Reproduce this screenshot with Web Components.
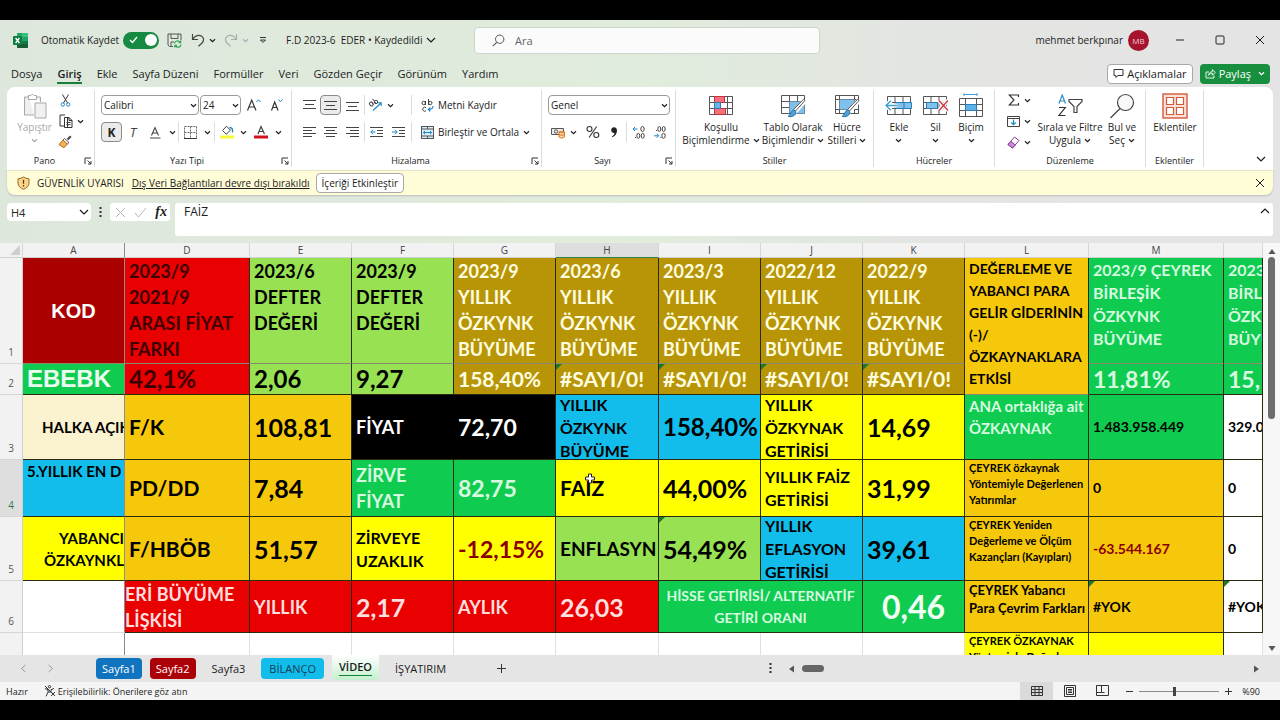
<!DOCTYPE html>
<html lang="tr">
<head>
<meta charset="utf-8">
<title>F.D 2023-6 EDER - Excel</title>
<style>
html,body{margin:0;height:100%;background:#000}
body{font-family:"Open Sans","Noto Sans",sans-serif;color:#1c1c1c}
</style>
</head>
<body>
<excel-app></excel-app>
<script>
const ICONS = {
  excel:[15,15,`<rect x="4" y="0" width="11" height="15" rx="1" fill="#21a366"/><path d="M9 0h5a1 1 0 0 1 1 1v3H9z" fill="#33c481"/><path d="M4 8h11v6a1 1 0 0 1-1 1H5a1 1 0 0 1-1-1z" fill="#185c37"/><path d="M9 8h6v3H9z" fill="#107c41"/><rect y="3" width="9" height="9" rx="1" fill="#107c41"/><path d="M2.600 5l3.800 5M6.400 5l-3.800 5" stroke="#fff" stroke-width="1.300"/>`],
  save:[15,15,`<path d="M6 13.500H2.500L1 12V1h13v6M4 1v4.500h7V1M4 13V9h3" fill="none" stroke="#555" stroke-width="1"/><path d="M7.500 10.500a3 3 0 0 1 5.500-1.200M13.700 7.500v2.200h-2.200M14 11.500a3 3 0 0 1-5.500 1.300M7.800 14.500v-2.200h2.200" fill="none" stroke="#2fa65a" stroke-width="1.200"/>`],
  undo:[14,14,`<path d="M1.500 1v5.500h5.500M1.700 6.300C4 2.500 8 1.300 10.700 3.200c2.600 1.900 2.300 4.800.3 6.800L7.500 13.300" fill="none" stroke="#444" stroke-width="1.200"/>`],
  redo:[14,14,`<path d="M12.500 1v5.500H7M12.300 6.300C10 2.500 6 1.300 3.300 3.200.7 5.100 1 8 3 10l3.500 3.300" fill="none" stroke="#a9b0a8" stroke-width="1.200"/>`],
  chev:[7,7,`<path d="M1 2.300l2.500 2.400L6 2.300" fill="none" stroke="currentColor" stroke-width="1.200"/>`],
  chevL:[10,10,`<path d="M1 3l4 4 4-4" fill="none" stroke="currentColor" stroke-width="1.200"/>`],
  chevU:[10,10,`<path d="M1 7l4-4 4 4" fill="none" stroke="currentColor" stroke-width="1.200"/>`],
  more:[8,8,`<path d="M1 1.500h6M1.500 4L4 6.500 6.500 4z" fill="none" stroke="#333" stroke-width="1"/>`],
  search:[13,13,`<circle cx="7.700" cy="5.200" r="4.200" fill="none" stroke="#555"/><path d="M4.700 8.300L.8 12.200" stroke="#555" stroke-width="1.100"/>`],
  min:[10,10,`<path d="M1 5h8" stroke="#222"/>`],
  max:[10,10,`<rect x="1" y="1" width="8" height="8" rx="1" fill="none" stroke="#222"/>`],
  close:[10,10,`<path d="M1 1l8 8M9 1L1 9" stroke="currentColor"/>`],
  comment:[11,11,`<path d="M1 1.500h9v6H5L2.800 9.500V7.500H1z" fill="none" stroke="#333"/>`],
  share:[11,11,`<path d="M4 4H1v6h8V7.500M3.500 7.300C4 4.800 5.500 3.800 7.300 3.800V1.500L10.300 4.500 7.300 7.300V5.300C5.700 5.300 4.500 6 3.500 7.300z" fill="none" stroke="#fff" stroke-width=".9"/>`],
  paste:[24,26,`<path d="M6 4H1.500v18H11M13 4h4.500v5" fill="#efefef" stroke="#a8a8a8"/><path d="M5.500 2.500h2.300a2 2 0 0 1 3.400 0h2.300v4h-8z" fill="#fff" stroke="#a8a8a8"/><path d="M12 10h11v15H12z" fill="#f1f1f1" stroke="#a8a8a8"/>`],
  cut:[11,13,`<path d="M2.500.5L7.500 9M8.500.5L3.500 9" stroke="#333" fill="none"/><circle cx="2.800" cy="10.500" r="1.700" fill="none" stroke="#1a86c7"/><circle cx="8.200" cy="10.500" r="1.700" fill="none" stroke="#1a86c7"/>`],
  copy:[14,14,`<path d="M5 12H1V1h5M8.500 13.500V3.500H5.500v10h7.500V6.500L10 3.500H8M10 3.500v3h3M7.500 8.500h4M7.500 10.700h4" fill="none" stroke="#333"/>`],
  brush:[14,14,`<path d="M12.800 1.200L9.500 4.500" stroke="#444" stroke-width="2"/><path d="M6.500 3.500l4.500 4-1.800 1.500L5 5z" fill="#fff" stroke="#555"/><path d="M5 5l4.200 4L6 12.800 1 9.500z" fill="#f0b35c" stroke="#b96a16"/>`],
  aup:[15,14,`<path d="M1.500 12.500L5.700 2 10 12.500M3 9h5.500" fill="none" stroke="#333" stroke-width="1.200"/><path d="M10.500 4l2-2.200 2 2.200" fill="none" stroke="#1a86c7"/>`],
  adown:[15,14,`<path d="M2.500 12.500L5.700 4 9 12.500M3.700 9.500h4" fill="none" stroke="#333" stroke-width="1.200"/><path d="M9.500 1.500l2 2.200 2-2.200" fill="none" stroke="#1a86c7"/>`],
  underline:[13,13,`<path d="M2.500 9.500L6 1.500l3.500 8M3.700 7h4.600" fill="none" stroke="#444" stroke-width="1.100"/><path d="M1 12h10.500" stroke="#444"/>`],
  borders:[13,13,`<path d="M.5 6.500h12M6.500.5v12M.5.5h12v12H.5z" fill="none" stroke="#666" stroke-dasharray="2 1"/><path d="M0 12.500h13" stroke="#333"/>`],
  fill:[15,14,`<path d="M2.500 5.500L6.500 1.200l4 4-4.300 4z" fill="none" stroke="#444"/><path d="M9.500 2.500c3 0 3.300 2 3 5" fill="none" stroke="#1a86c7" stroke-width="1.300"/><rect y="10.500" width="14" height="3" fill="#f8f83a"/>`],
  fcolor:[15,14,`<path d="M4 9L7 1.500 10.500 9M5 6.500h4.500" fill="none" stroke="#444" stroke-width="1.200"/><rect y="10.500" width="14" height="3" fill="#d2131f"/>`],
  vtop:[13,13,`<path d="M0 1.500h13M2 5.500h9M0 9.500h13" stroke="#444"/>`],
  vmid:[13,13,`<path d="M0 2.500h13M2 6.500h9M0 10.500h13" stroke="#444"/>`],
  vbot:[13,13,`<path d="M0 3.500h13M2 7.500h9M0 11.500h13" stroke="#444"/>`],
  left:[13,13,`<path d="M0 1.500h13M0 4.500h9M0 7.500h13M0 10.500h9" stroke="#444"/>`],
  center:[13,13,`<path d="M0 1.500h13M2 4.500h9M0 7.500h13M2 10.500h9" stroke="#444"/>`],
  right:[13,13,`<path d="M0 1.500h13M4 4.500h9M0 7.500h13M4 10.500h9" stroke="#444"/>`],
  outdent:[13,13,`<path d="M0 1.500h13M7 4.500h6M7 7.500h6M0 10.500h13" stroke="#444"/><path d="M5.500 6H.8M3 3.800L.8 6 3 8.200" fill="none" stroke="#1a86c7"/>`],
  indent:[13,13,`<path d="M0 1.500h13M7 4.500h6M7 7.500h6M0 10.500h13" stroke="#444"/><path d="M0 6h5M3 3.800L5.200 6 3 8.200" fill="none" stroke="#1a86c7"/>`],
  orient:[15,14,`<ellipse cx="3.300" cy="6" rx="1.700" ry="2" transform="rotate(-40 3.300 6)" fill="none" stroke="#444"/><path d="M3.600 3.700l2 3M4.500.8l3.800 5" stroke="#444"/><circle cx="8" cy="4" r="1.700" fill="none" stroke="#444"/><path d="M5 12.500L13 5M9.800 4.700H13.200V8" fill="none" stroke="#1a86c7" stroke-width="1.100"/>`],
  wrap:[13,13,`<circle cx="2.700" cy="4" r="1.700" fill="none" stroke="#444"/><path d="M4.500 2v4M7.500 0v6M5 8.700a2 2 0 1 0 0 3" fill="none" stroke="#444"/><circle cx="9.300" cy="4" r="1.700" fill="none" stroke="#444"/><path d="M12 7c0 3-1.500 3.500-4.500 3.500M9.300 8.500l-2 2 2 2" fill="none" stroke="#1a86c7" stroke-width="1.100"/>`],
  merge:[13,13,`<rect x=".5" y=".5" width="12" height="12" fill="#d9eefa" stroke="#555"/><path d="M.5 3h12M.5 10h12M6.500.5V3M6.500 10v2.500" stroke="#555"/><path d="M2.500 6.500h8M4 4.900L2.300 6.500 4 8.100M9 4.900l1.700 1.600L9 8.100" fill="none" stroke="#1a86c7"/>`],
  money:[15,13,`<path d="M.5 2.500h12v6H.5z" fill="#eee" stroke="#555"/><circle cx="5" cy="5.500" r="1.700" fill="none" stroke="#555"/><path d="M8 6v5c1.500 1.300 4 1.300 5.500 0V6c-1.500-1-4-1-5.500 0zM8 8.500c1.500 1 4 1 5.500 0M8 6c1.500 1 4 1 5.500 0" fill="#fbd3a8" stroke="#d9781e"/>`],
  percent:[14,14,`<circle cx="3.500" cy="4" r="2.500" fill="none" stroke="#333" stroke-width="1.100"/><circle cx="10.300" cy="10" r="2.500" fill="none" stroke="#333" stroke-width="1.100"/><path d="M10.700 1.500L3 12.500" stroke="#333" stroke-width="1.100"/>`],
  comma:[8,12,`<path d="M4 1.200c2 0 3.200 1.300 3 3.800C6.700 8 5 10.300 2.300 11.300l-.4-.8C3.500 9.600 4.400 8.400 4.500 7c-2 .3-3.300-1-3.300-2.900C1.200 2.300 2.400 1.200 4 1.200z" fill="#222"/>`],
  incdec:[14,13,`<path d="M5.500 3H1M3 1L1 3l2 2" fill="none" stroke="#1a86c7"/><ellipse cx="10.500" cy="3" rx="1.700" ry="2.500" fill="none" stroke="#444"/><ellipse cx="6.300" cy="9.800" rx="1.500" ry="2.500" fill="none" stroke="#444"/><ellipse cx="10.700" cy="9.800" rx="1.500" ry="2.500" fill="none" stroke="#444"/><path d="M3 11.500h1" stroke="#444"/>`],
  decdec:[14,13,`<path d="M1 9.800h4.500M3.700 7.800l2 2-2 2" fill="none" stroke="#1a86c7"/><ellipse cx="6.300" cy="3" rx="1.500" ry="2.500" fill="none" stroke="#444"/><ellipse cx="10.700" cy="3" rx="1.500" ry="2.500" fill="none" stroke="#444"/><ellipse cx="10.500" cy="9.800" rx="1.700" ry="2.500" fill="none" stroke="#444"/><path d="M3 4.500h1M7.300 11.500h1" stroke="#444"/>`],
  cond:[26,22,`<path d="M1.500 1.500h23v18h-23zM1.500 7.500h23M1.500 13.500h23M6.500 1.500v18M19.500 1.500v18" fill="#fff" stroke="#555"/><path d="M6.500 1.500h10v6h-10zM6.500 13.500h11v6h-11z" fill="#f6707c" stroke="#c9303c"/><path d="M6.500 7.500h6v6h-6z" fill="#6fb4e4" stroke="#3278b0"/>`],
  tfmt:[26,24,`<path d="M1.500 1.500h23v18h-23zM1.500 7.500h23M1.500 13.500h23M9.500 1.500v18M17.500 1.500v18" fill="#fff" stroke="#555"/><path d="M9.500 7.500h15v12h-15z" fill="#7fc0ec"/><path d="M25 6.500L14.500 18" stroke="#fff" stroke-width="5"/><path d="M25 6.500L15.500 17l-2-1.500L23.500 5.300z" fill="#fff" stroke="#555"/><path d="M13.500 16c2 .5 3 2 2 4-1.500 2.500-4.500 3-7.500 2.500 2.500-1 2.500-5.500 5.500-6.500z" fill="#4aa3dc" stroke="#2b6f9e"/>`],
  cfmt:[26,24,`<path d="M1.500 1.500h23v18h-23zM1.500 5.500h23M1.500 15.500h23M5.500 1.500v18M20.500 1.500v18" fill="#fff" stroke="#555"/><path d="M5.500 5.500h15v10h-15z" fill="#7fc0ec"/><path d="M25 6.500L14.500 18" stroke="#fff" stroke-width="5"/><path d="M25 6.500L15.500 17l-2-1.500L23.500 5.300z" fill="#fff" stroke="#555"/><path d="M13.500 16c2 .5 3 2 2 4-1.500 2.500-4.500 3-7.500 2.500 2.500-1 2.500-5.500 5.500-6.500z" fill="#4aa3dc" stroke="#2b6f9e"/>`],
  ins:[28,22,`<path d="M2.500 1.500h23v18h-23zM2.500 7.500h23M2.500 13.500h23M10 1.500v18M18 1.500v18" fill="#fff" stroke="#555"/><path d="M11.500 7.500h15v6h-15zM19 7.500v6" fill="#7fc0ec" stroke="#2b7db5"/><path d="M12.500 10.500H1.500M6 5.500l-5 5 5 5" fill="none" stroke="#fff" stroke-width="4"/><path d="M12.500 10.500H1.500M6 5.800l-5 4.700 5 4.700" fill="none" stroke="#3c9fd6" stroke-width="1.400"/>`],
  del:[28,22,`<path d="M1.500 1.500h23v18h-23zM1.500 7.500h23M1.500 13.500h23M9 1.500v18M17 1.500v18" fill="#fff" stroke="#555"/><path d="M4.500 7.500h11v6h-11z" fill="#7fc0ec" stroke="#2b7db5"/><path d="M17 5.500l9 10M26 5.500l-9 10" stroke="#fff" stroke-width="4"/><path d="M17 5.500l9 10M26 5.500l-9 10" stroke="#d5323e" stroke-width="1.300"/>`],
  fmt:[26,26,`<path d="M6 1.500h13M6 0v3M19 0v3" stroke="#3c9fd6" fill="none"/><path d="M1.500 5.500h23v18h-23zM1.500 11.500h23M1.500 17.500h23M7.500 5.500v18M18.500 5.500v18" fill="#fff" stroke="#555"/><path d="M7.500 11.500h11v6h-11z" fill="#5fb0e5" stroke="#2b7db5"/>`],
  sum:[12,12,`<path d="M10.500 3V1H1.200L6 6l-4.800 5h9.300V9" fill="none" stroke="#333" stroke-width="1.200"/>`],
  filld:[13,13,`<path d="M.5 1.500h12v10H.5zM.5 3.500h12" fill="none" stroke="#444"/><path d="M6.500 4.500v5M4.300 7.500l2.200 2.200 2.200-2.200" fill="none" stroke="#1a86c7" stroke-width="1.200"/>`],
  eraser:[13,13,`<path d="M7.500 1l4.500 3.500L5.500 12 1 8.500z" fill="#fff" stroke="#8a3a9c"/><path d="M3.800 5.200L8.300 9 5.500 12 1 8.500z" fill="#c98ad6" stroke="#8a3a9c"/>`],
  sort:[26,24,`<path d="M2 9.500L5.200 1 8.500 9.500M3 7h4.500" fill="none" stroke="#2a8fc9" stroke-width="1.200"/><path d="M2 13.500h6.300L2 21.500h6.500" fill="none" stroke="#333" stroke-width="1.200"/><path d="M12 5.500h13v2l-5 5v6h-3v-6l-5-5z" fill="none" stroke="#444" stroke-width="1.200"/>`],
  find:[26,26,`<circle cx="16.500" cy="9.500" r="8" fill="#fafafa" stroke="#444" stroke-width="1.200"/><path d="M11 15.500L1.500 25" stroke="#444" stroke-width="1.200"/>`],
  addin:[26,26,`<rect x="1" y="1" width="24" height="24" fill="#fbe1d9" stroke="#d05b37" stroke-width="1.400"/><path d="M4.500 4.500h7v7h-7zM14.500 4.500h7v7h-7zM4.500 14.500h7v7h-7zM14.500 14.500h7v7h-7z" fill="#fff" stroke="#d05b37" stroke-width="1.200"/>`],
  launch:[8,8,`<path d="M1 7V1h6M3.500 3.500L7 7M7 4v3H4" fill="none" stroke="#333"/>`],
  shield:[13,14,`<path d="M6.500 1C8 2 10 2.700 12 2.800V7c0 3-2.300 5-5.500 6.300C3.300 12 1 10 1 7V2.800C3 2.700 5 2 6.500 1z" fill="#fbd58b" stroke="#9b6a21"/><path d="M6.500 3.800v4M6.500 9v1.500" stroke="#5b3a0b" stroke-width="1.300"/>`],
  check:[13,11,`<path d="M1 6l3.500 4L12 1" fill="none" stroke="#b5b5b5"/>`],
  cross:[11,11,`<path d="M1 1l9 9M10 1l-9 9" stroke="#b5b5b5"/>`],
  dots:[3,11,`<path d="M.5 0h2v2h-2zM.5 4h2v2h-2zM.5 8h2v2h-2z" fill="#333"/>`],
  tick:[9,8,`<path d="M1 4l2.500 2.500L8 1" fill="none" stroke="#fff" stroke-width="1.400"/>`],
  prev:[7,9,`<path d="M5.500 1L1.500 4.500l4 3.500" fill="none" stroke="#9a9a9a"/>`],
  next:[7,9,`<path d="M1.500 1l4 3.500-4 3.500" fill="none" stroke="#9a9a9a"/>`],
  plus:[11,11,`<path d="M5.500 1v9M1 5.500h9" stroke="#333"/>`],
  plusS:[9,9,`<path d="M4.500 1v7M1 4.500h7" stroke="#333"/>`],
  minusS:[9,9,`<path d="M1 4.500h7" stroke="#333"/>`],
  triL:[7,8,`<path d="M6 .5v7L1 4z" fill="#555"/>`],
  triR:[7,8,`<path d="M1 .5v7L6 4z" fill="#555"/>`],
  triU:[8,7,`<path d="M.5 6h7L4 1z" fill="#555"/>`],
  triD:[8,7,`<path d="M.5 1h7L4 6z" fill="#555"/>`],
  corner:[12,12,`<path d="M11 1v10H1z" fill="#cfcfcf"/>`],
  acc:[12,12,`<circle cx="5.500" cy="1.700" r="1.200" fill="none" stroke="#333"/><path d="M1 3.500l3 1.200v2.500L2 11.300M10 3.500L7 4.700v2L8 8M4 7h3M1 1l10 10M7 11l4-4" fill="none" stroke="#333"/>`],
  vnorm:[12,12,`<path d="M.5 1.500h11v9H.5zM.5 4.500h11M.5 7.500h11M4 1.500v9M8 1.500v9" fill="none" stroke="#333"/>`],
  vpage:[12,12,`<path d="M.5.5h11v11H.5zM2.500 2.500h7v7h-7zM4 4.500h4M4 6h4M4 7.500h4" fill="none" stroke="#333"/>`],
  vbrk:[13,12,`<path d="M.5.500h12v10H.5zM.5 7.500h5v-7M5.500 7.500h3" fill="none" stroke="#333"/>`],
  cell:[10,11,`<path d="M3.500 1h3v3h3v3h-3v3h-3V7h-3V4h3z" fill="#fff" stroke="#222"/>`]
};
const BASE = `*,:host{box-sizing:border-box}
button,input,select,textarea{font:inherit;color:inherit;margin:0}
button{background:none;border:0;padding:0;display:flex;align-items:center;justify-content:center;white-space:nowrap}
`;
class Part extends HTMLElement {
  constructor() {
    super();
    const C = this.constructor;
    this.attachShadow({mode:'open'}).innerHTML = `<style>${BASE}${C.css}</style>${C.html}`;
  }
}
const define = (tag, css, html) => customElements.define(tag, class extends Part { static css = css; static html = html; });

customElements.define('ui-icon', class extends HTMLElement {
  connectedCallback() {
    if (this.shadowRoot) return;
    const [w,h,body] = ICONS[this.getAttribute('name')];
    this.attachShadow({mode:'open'}).innerHTML =
      `<style>:host{display:block;flex:none}svg{display:block}</style><svg width="${w}" height="${h}" viewBox="0 0 ${w} ${h}" aria-hidden="true">${body}</svg>`;
  }
});

/* Small ribbon button; --w sets its width */
customElements.define('tool-button', class extends HTMLElement {
  connectedCallback() {
    if (this.shadowRoot) return;
    const icon = this.getAttribute('icon'), label = this.getAttribute('label');
    this.attachShadow({mode:'open'}).innerHTML = `<style>${BASE}
      :host{display:block;flex:none;width:var(--w,auto);height:20px;color:#222}
      button{width:100%;height:100%;gap:4px;border-radius:4px}
      :host([on]) button{background:#ebebeb;border:1px solid #8b8b8b}
      </style><button${label?` aria-label="${label}"`:''}>${icon?`<ui-icon name="${icon}"></ui-icon>`:''}<slot></slot></button>`;
  }
});

/* Large ribbon button: icon above a caption */
customElements.define('big-button', class extends HTMLElement {
  connectedCallback() {
    if (this.shadowRoot) return;
    this.attachShadow({mode:'open'}).innerHTML = `<style>${BASE}
      :host{display:block;flex:none;width:var(--w);padding-top:3px}
      button{width:100%;flex-direction:column;justify-content:flex-start;line-height:13px;gap:2px;white-space:normal}
      .i{height:26px;display:grid;place-items:center}
      ::slotted(span){display:flex;align-items:center;gap:3px;height:13px;white-space:nowrap}
      .t{display:flex;flex-direction:column;align-items:center}
      </style><button><span class="i"><ui-icon name="${this.getAttribute('icon')}"></ui-icon></span><span class="t"><slot></slot></span></button>`;
  }
});

customElements.define('combo-box', class extends HTMLElement {
  connectedCallback() {
    if (this.shadowRoot) return;
    this.attachShadow({mode:'open'}).innerHTML = `<style>${BASE}
      :host{display:grid;align-items:center;flex:none;width:var(--w);height:20px}
      select,ui-icon{grid-area:1/1}
      select{appearance:none;width:100%;height:100%;border:1px solid #9a9a9a;border-radius:4px;background:#fff;padding:0 2px;color:#222}
      :host([plain]) select{border:0;padding:0 4px}
      ui-icon{justify-self:end;margin-right:2px;pointer-events:none}
      </style><select aria-label="${this.getAttribute('label')}"><option>${this.getAttribute('value')}</option></select><ui-icon name="${this.getAttribute('arrow')||'chev'}"></ui-icon>`;
  }
});

customElements.define('ribbon-group', class extends HTMLElement {
  connectedCallback() {
    if (this.shadowRoot) return;
    this.attachShadow({mode:'open'}).innerHTML = `<style>${BASE}
      :host{display:flex;flex-direction:column;flex:none;width:var(--w);border-right:1px solid #dcdcdc;margin:3px 0}
      .body{flex:1;padding:0 0 0 var(--in,6px);display:flex;min-height:0}
      footer{height:13px;display:grid;grid-template-columns:1fr;align-items:center;font-size:9px;line-height:12px}
      :host([launcher]) footer{grid-template-columns:1fr 12px}
      footer span{justify-self:center;white-space:nowrap}
      </style><div class="body"><slot></slot></div><footer><span>${this.getAttribute('label')}</span>${this.hasAttribute('launcher')?'<button aria-label="Ayarlar"><ui-icon name="launch"></ui-icon></button>':''}</footer>`;
  }
});

define('title-bar', `
:host{display:grid;grid-template-columns:minmax(474px,1fr) 27% minmax(0,1fr);align-items:center;height:40px;font-size:10px}
.l,.r{display:flex;align-items:center;white-space:nowrap}
.l{padding-left:13px}
.auto{display:flex;align-items:center;gap:4px;margin-left:13px}
.auto input{position:absolute;opacity:0;width:0;height:0}
.sw{width:36px;height:17px;border-radius:9px;background:#178a41;display:flex;align-items:center;justify-content:space-between;padding:0 2px 0 6px}
.sw i{width:12px;height:12px;border-radius:50%;background:#fff}
.ml{margin-left:8px}
.file{margin-left:19px;gap:4px}
.s{display:flex;align-items:center;height:27px;background:#fafbfa;border:1px solid #cbd5c9;border-radius:4px;padding-left:17px;gap:10px}
.s input{border:0;background:none;outline:0;flex:1;min-width:0;font-size:11px;padding:0}
.s input::placeholder{color:#666;opacity:1}
.r{justify-content:flex-end;padding-right:15px}
.av{width:21px;height:21px;border-radius:50%;background:#a5132d;color:#f3c9d1;font-size:8px;display:grid;place-items:center;margin:0 26px 0 5px}
.r button+button{margin-left:30px}`, `
<div class="l"><ui-icon name="excel"></ui-icon>
<label class="auto">Otomatik Kaydet<input type="checkbox" checked><span class="sw"><ui-icon name="tick"></ui-icon><i></i></span></label>
<button class="ml" aria-label="Kaydet"><ui-icon name="save"></ui-icon></button>
<button style="margin-left:9px;gap:4px" aria-label="Geri al"><ui-icon name="undo"></ui-icon><ui-icon name="chev"></ui-icon></button>
<button style="margin-left:8px;gap:4px;color:#aab" aria-label="Yinele"><ui-icon name="redo"></ui-icon><ui-icon name="chev"></ui-icon></button>
<button style="margin-left:10px" aria-label="Özelleştir"><ui-icon name="more"></ui-icon></button>
<button class="file"><span style="white-space:pre">F.D 2023-6  EDER • Kaydedildi</span><ui-icon name="chevL"></ui-icon></button></div>
<label class="s"><ui-icon name="search"></ui-icon><input type="search" placeholder="Ara" aria-label="Ara"></label>
<div class="r"><span>mehmet berkpınar</span><span class="av">MB</span>
<button aria-label="Simge durumuna küçült"><ui-icon name="min"></ui-icon></button><button aria-label="Ekranı kapla"><ui-icon name="max"></ui-icon></button><button aria-label="Kapat"><ui-icon name="close"></ui-icon></button></div>`);

define('menu-tabs', `
:host{display:flex;align-items:center;height:27px;padding:0 10px 0 11px;font-size:11px}
nav{display:flex;gap:15px;flex:1}
nav button{height:20px;border-bottom:2px solid transparent;padding-top:2px}
nav button[aria-current]{font-weight:600;border-color:#14803c}
.c,.p{height:20px;border-radius:4px;padding:0 5px;gap:3px}
.c{background:#fff;border:1px solid #a9a9a9}
.p{background:#178f3f;color:#fff;margin-left:7px}
.p ui-icon:last-child{margin-left:4px}`, `
<nav><button>Dosya</button><button aria-current="page">Giriş</button><button>Ekle</button><button>Sayfa Düzeni</button><button>Formüller</button><button>Veri</button><button>Gözden Geçir</button><button>Görünüm</button><button>Yardım</button></nav>
<button class="c"><ui-icon name="comment"></ui-icon>Açıklamalar</button>
<button class="p"><ui-icon name="share"></ui-icon>Paylaş<ui-icon name="chev"></ui-icon></button>`);

const CH = '<ui-icon name="chev"></ui-icon>';
define('ribbon-bar', `
:host{display:flex;height:83px;margin:0 7px;background:#fff;border-radius:8px 8px 0 0;font-size:10px}
.rows{display:flex;flex-direction:column;gap:7px;padding-top:5px}
.row{display:flex;align-items:center;height:20px}
.col{display:flex;flex-direction:column;gap:1px}
.sep{width:1px;height:20px;background:#dcdcdc}
.off{color:#a8a8a8}
.auto{--w:auto}
.k{font-weight:700;font-size:12px}
.it{font-style:italic;font-size:13px;color:#444}
.end{flex:1;display:flex;align-items:flex-end;justify-content:flex-end;padding:0 7px 6px}`, `
<ribbon-group label="Pano" launcher style="--w:88px;--in:7px">
 <big-button icon="paste" class="off" style="--w:41px"><span>Yapıştır</span><span>${CH}</span></big-button>
 <div class="col"><tool-button icon="cut" label="Kes" style="--w:20px"></tool-button>
 <tool-button icon="copy" style="--w:32px" label="Kopyala">${CH}</tool-button>
 <tool-button icon="brush" label="Biçim Boyacısı" style="--w:20px"></tool-button></div></ribbon-group>
<ribbon-group label="Yazı Tipi" launcher style="--w:197px;--in:6px"><div class="rows">
 <div class="row"><combo-box label="Yazı tipi" value="Calibri" style="--w:98px"></combo-box><combo-box label="Boyut" value="24" style="--w:41px;margin-left:1px"></combo-box>
 <tool-button icon="aup" label="Büyüt" style="--w:24px"></tool-button><tool-button icon="adown" label="Küçült" style="--w:22px"></tool-button></div>
 <div class="row"><tool-button on style="--w:21px" class="k">K</tool-button><tool-button class="it" style="--w:22px">T</tool-button><tool-button icon="underline" label="Altı çizili" style="--w:22px"></tool-button><tool-button style="--w:12px" label="Çizgi">${CH}</tool-button><span class="sep"></span>
 <tool-button icon="borders" label="Kenarlık" style="--w:22px"></tool-button><tool-button style="--w:13px" label="Kenarlıklar">${CH}</tool-button><span class="sep"></span>
 <tool-button icon="fill" label="Dolgu" style="--w:24px"></tool-button><tool-button style="--w:9px" label="Dolgular">${CH}</tool-button><tool-button icon="fcolor" label="Yazı rengi" style="--w:26px"></tool-button><tool-button style="--w:9px" label="Renkler">${CH}</tool-button></div></div></ribbon-group>
<ribbon-group label="Hizalama" launcher style="--w:250px"><div class="rows">
 <div class="row"><tool-button icon="vtop" label="Üste hizala" style="--w:22px"></tool-button><tool-button on icon="vmid" label="Ortaya hizala" style="--w:21px"></tool-button><tool-button icon="vbot" label="Alta hizala" style="--w:23px"></tool-button><span class="sep"></span>
 <tool-button icon="orient" label="Yön" style="--w:32px">${CH}</tool-button><span class="sep" style="margin:0 9px 0 14px"></span><tool-button icon="wrap" class="auto">Metni Kaydır</tool-button></div>
 <div class="row"><tool-button icon="left" label="Sola" style="--w:22px"></tool-button><tool-button icon="center" label="Ortala" style="--w:21px"></tool-button><tool-button icon="right" label="Sağa" style="--w:23px"></tool-button><span class="sep"></span>
 <tool-button icon="outdent" label="Girintiyi azalt" style="--w:22px"></tool-button><tool-button icon="indent" label="Girintiyi artır" style="--w:22px"></tool-button><span class="sep" style="margin:0 9px 0 2px"></span><tool-button icon="merge" class="auto">Birleştir ve Ortala<ui-icon name="chev"></ui-icon></tool-button></div></div></ribbon-group>
<ribbon-group label="Sayı" launcher style="--w:134px"><div class="rows">
 <div class="row"><combo-box label="Sayı biçimi" value="Genel" style="--w:122px"></combo-box></div>
 <div class="row"><tool-button icon="money" label="Para" style="--w:32px">${CH}</tool-button><tool-button icon="percent" label="Yüzde" style="--w:26px"></tool-button><tool-button icon="comma" label="Virgül" style="--w:16px"></tool-button><span class="sep" style="margin:0 2px 0 4px"></span>
 <tool-button icon="incdec" label="Ondalık artır" style="--w:20px"></tool-button><tool-button icon="decdec" label="Ondalık azalt" style="--w:22px"></tool-button></div></div></ribbon-group>
<ribbon-group label="Stiller" style="--w:198px"><big-button icon="cond" style="--w:78px"><span>Koşullu</span><span>Biçimlendirme ${CH}</span></big-button>
 <big-button icon="tfmt" style="--w:66px"><span>Tablo Olarak</span><span>Biçimlendir ${CH}</span></big-button><big-button icon="cfmt" style="--w:42px"><span>Hücre</span><span>Stilleri ${CH}</span></big-button></ribbon-group>
<ribbon-group label="Hücreler" style="--w:121px"><big-button icon="ins" style="--w:38px"><span>Ekle</span><span>${CH}</span></big-button><big-button icon="del" style="--w:35px"><span>Sil</span><span>${CH}</span></big-button><big-button icon="fmt" style="--w:36px"><span>Biçim</span><span>${CH}</span></big-button></ribbon-group>
<ribbon-group label="Düzenleme" style="--w:151px;--in:8px"><div class="col"><tool-button icon="sum" label="Toplam" style="--w:32px">${CH}</tool-button><tool-button icon="filld" label="Doldur" style="--w:32px">${CH}</tool-button><tool-button icon="eraser" label="Temizle" style="--w:32px">${CH}</tool-button></div>
 <big-button icon="sort" style="--w:70px"><span>Sırala ve Filtre</span><span>Uygula ${CH}</span></big-button><big-button icon="find" style="--w:34px"><span>Bul ve</span><span>Seç ${CH}</span></big-button></ribbon-group>
<ribbon-group label="Eklentiler" style="--w:58px;--in:4px"><big-button icon="addin" style="--w:50px"><span>Eklentiler</span></big-button></ribbon-group>
<div class="end"><button aria-label="Şeridi daralt"><ui-icon name="chevL"></ui-icon></button></div>`);

define('security-bar', `
:host{display:flex;align-items:center;height:25px;margin:0 7px;padding:0 8px 0 10px;background:#fffcd8;border-top:1px solid #e6e3c8;border-radius:0 0 8px 8px;font-size:10px;box-shadow:0 1px 2px #bbb}
strong{font-weight:500;margin-left:7px}
a{color:#222;margin-left:8px}
.e{height:20px;background:#fff;border:1px solid #a9a9a9;border-radius:4px;padding:0 5px;margin-left:6px}
.x{margin-left:auto}`, `
<ui-icon name="shield"></ui-icon><strong>GÜVENLİK UYARISI</strong><a href="#baglantilar">Dış Veri Bağlantıları devre dışı bırakıldı</a><button class="e">İçeriği Etkinleştir</button><button class="x" aria-label="Kapat"><ui-icon name="close"></ui-icon></button>`);

define('formula-bar', `
:host{display:flex;align-items:flex-start;height:48px;padding:8px 7px 0 7px;font-size:11px}
combo-box{height:18px}
.d{margin:4px 8px 0 8px}
.f{display:flex;align-items:center;justify-content:space-between;width:60px;height:18px;background:#fff;border-radius:3px;padding:0 3px 0 5px}
.fx{font:italic 700 14px "Liberation Serif",serif;line-height:16px}
.in{flex:1;display:flex;background:#fff;border-radius:3px;height:33px;margin-left:5px;padding:0 3px 0 9px;align-items:flex-start}
.in button{margin-top:3px}
textarea{flex:1;border:0;resize:none;height:33px;padding:0;line-height:18px;font-size:12px;background:none;outline:0;overflow:hidden}`, `
<combo-box plain arrow="chevL" label="Ad kutusu" value="H4" style="--w:84px"></combo-box><ui-icon class="d" name="dots"></ui-icon>
<div class="f"><button aria-label="İptal"><ui-icon name="cross"></ui-icon></button><button aria-label="Gir"><ui-icon name="check"></ui-icon></button><button class="fx" aria-label="İşlev ekle">fx</button></div>
<div class="in"><textarea aria-label="Formül çubuğu">FAİZ</textarea><button aria-label="Daralt"><ui-icon name="chevU"></ui-icon></button></div>`);

const RED='#e90000', ORG='#f6c80b', LIME='#97e153', GOLD='#b79507', GRN='#0fcb50', CYAN='#12bdec', YEL='#ffff00', IVORY='#fffde0', MINT='#d8fbe0', ROSE='#ffdede', MAR='#8a0000';
const COLS = [['A',102],['D',125],['E',102],['F',102],['G',102],['H',103],['I',102],['J',102],['K',102],['L',124],['M',135],['',0]];
/* cell: [text, background, colour, text style, options] */
const growth = q => [q+'\nYILLIK\nÖZKYNK\nBÜYÜME',GOLD,IVORY,'h top'];
const ROWS = [
 [106,[['KOD','#ab0000','#fff','kod mid'],['2023/9\n2021/9\nARASI FİYAT\nFARKI',RED,'#3c0000','h top'],['2023/6\nDEFTER\nDEĞERİ',LIME,'#000','h top'],['2023/9\nDEFTER\nDEĞERİ',LIME,'#000','h top'],growth('2023/9'),growth('2023/6'),growth('2023/3'),growth('2022/12'),growth('2022/9'),
  ['DEĞERLEME VE\nYABANCI PARA\nGELİR GİDERİNİN\n(-)/\nÖZKAYNAKLARA\nETKİSİ',ORG,'#000','w top',{rs:2}],['2023/9 ÇEYREK\nBİRLEŞİK\nÖZKYNK\nBÜYÜME',GRN,MINT,'m top'],['2023\nBİRLE\nÖZKY\nBÜYÜ',GRN,MINT,'m top']]],
 [31,[['EBEBK',GRN,'#eafff0','ebk'],['42,1%',RED,'#3c0000','p'],['2,06',LIME,'#000','p'],['9,27',LIME,'#000','p'],['158,40%',GOLD,IVORY,'v'],['#SAYI/0!',GOLD,IVORY,'v',{err:1}],['#SAYI/0!',GOLD,IVORY,'v',{err:1}],['#SAYI/0!',GOLD,IVORY,'v',{err:1}],['#SAYI/0!',GOLD,IVORY,'v',{err:1}],['11,81%',GRN,MINT,'n'],['15,',GRN,MINT,'n']]],
 [65,[['HALKA AÇIK','#fbf3cf','#000','l ind'],['F/K',ORG,'#000','v'],['108,81',ORG,'#000','b'],['FİYAT','#000','#fff','h',{nb:1}],['72,70','#000','#fff','n'],['YILLIK\nÖZKYNK\nBÜYÜME',CYAN,'#000','m'],['158,40%',CYAN,'#000','p'],['YILLIK\nÖZKYNAK\nGETİRİSİ',YEL,'#000','m'],['14,69',YEL,'#000','b'],['ANA ortaklığa ait\nÖZKAYNAK',GRN,MINT,'l top'],['1.483.958.449',GRN,'#000','s'],['329.0','#fff','#000','s']]],
 [57,[['5.YILLIK EN D',CYAN,'#000','l top'],['PD/DD',ORG,'#000','v'],['7,84',ORG,'#000','b'],['ZİRVE\nFİYAT',GRN,MINT,'h'],['82,75',GRN,MINT,'n'],['FAİZ',YEL,'#000','v',{cur:1}],['44,00%',YEL,'#000','b'],['YILLIK FAİZ\nGETİRİSİ',YEL,'#000','m'],['31,99',YEL,'#000','b'],['ÇEYREK özkaynak\nYöntemiyle Değerlenen\nYatırımlar',ORG,'#000','t top'],['0',ORG,'#000','s'],['0','#fff','#000','s']]],
 [64,[['YABANCI\nÖZKAYNKL',YEL,'#000','l ra'],['F/HBÖB',ORG,'#000','v'],['51,57',ORG,'#000','b'],['ZİRVEYE\nUZAKLIK',YEL,'#000','m'],['-12,15%',YEL,MAR,'n'],['ENFLASYN',LIME,'#000','y'],['54,49%',LIME,'#000','b',{err:1}],['YILLIK\nEFLASYON\nGETİRİSİ',CYAN,'#000','m'],['39,61',CYAN,'#000','b'],['ÇEYREK Yeniden\nDeğerleme ve Ölçüm\nKazançları (Kayıpları)',ORG,'#000','t top'],['-63.544.167',ORG,MAR,'s'],['0','#fff','#000','s']]],
 [52,[['','','','l'],['ERİ BÜYÜME\nLİŞKİSİ',RED,ROSE,'h flush'],['YILLIK',RED,ROSE,'h'],['2,17',RED,ROSE,'b'],['AYLIK',RED,ROSE,'h'],['26,03',RED,ROSE,'b'],['HİSSE GETİRİSİ/ ALTERNATİF\nGETİRİ ORANI',GRN,MINT,'w mid',{cs:2}],['0,46',GRN,'#f2fff5','x mid'],['ÇEYREK Yabancı\nPara Çevrim Farkları',ORG,'#000','u top'],['#YOK',ORG,'#000','s',{err:1}],['#YOK','#fff','#000','s',{err:1}]]],
 [52,[['','','','l'],['','','','l'],['','','','l'],['','','','l'],['','','','l'],['','','','l'],['','','','l'],['','','','l'],['','','','l'],['ÇEYREK ÖZKAYNAK\nYöntemiyle Değerlenen',YEL,'#000','t top'],['',YEL,'#000','s'],['','','','s']]]
];
customElements.define('sheet-grid', class extends HTMLElement {
  connectedCallback() {
    if (this.shadowRoot) return;
    const head = COLS.map(([n])=>`<th scope="col"${n==='H'?' class="sel"':''}>${n}</th>`).join('');
    const body = ROWS.map(([h,cells],i)=>`<tr style="--h:${h-1}px"><th scope="row"${i===3?' class="sel"':''}>${i<6?i+1:''}</th>${cells.map(([t,bg,fg,c,o={}])=>
      `<td class="${bg?'on':''}${o.err?' err':''}${o.nb?' nb':''}"${o.rs?' rowspan="2"':''}${o.cs?` colspan="${o.cs}"`:''} style="${bg?`--bg:${bg};--fg:${fg}`:''}${o.rs?';--h:136px':''}"><div class="${c}">${t?`<span>${t}</span>`:''}</div>${o.cur?'<ui-icon class="cur" name="cell"></ui-icon>':''}</td>`).join('')}</tr>`).join('');
    this.attachShadow({mode:'open'}).innerHTML = `<style>${BASE}
    :host{display:flex;flex:1;min-height:0;background:#fff;overflow:hidden}
    .view{flex:1;min-width:0;overflow:hidden}
    table{width:100%;border-collapse:separate;border-spacing:0;table-layout:fixed;font-family:Lato,"Open Sans",sans-serif;font-weight:700}
    thead th{height:15px;padding:0;background:#f2f2f2;border-right:1px solid #d6d6d6;border-bottom:1px solid #cfcfcf;font:400 10px/14px "Open Sans",sans-serif;color:#444}
    thead th.sel{background:#dedede;border-bottom-color:#2f7d4a}
    thead th:first-child ui-icon{margin-left:9px}
    tbody th{background:#f2f2f2;padding:0 0 4px;vertical-align:bottom;font:400 10px/14px "Open Sans",sans-serif;color:#555;border-bottom:1px solid #d6d6d6;border-right:1px solid #cfcfcf}
    tbody th.sel{background:#dedede;color:#2f7d4a}
    td{padding:0;border-right:1px solid #e0e0e0;border-bottom:1px solid #e0e0e0;position:relative}
    td.on{background:var(--bg);color:var(--fg);border-color:#2a2a10}
    td.nb{border-right-color:#000}
    tbody tr:first-child td{border-bottom-color:#8a8a70}
    th:nth-child(2),tbody tr td:nth-child(2){border-right-color:#8c8c8c}
    td div{height:var(--h);overflow:hidden;display:flex;align-items:center;padding:0 0 0 4px;white-space:pre}
    td.err::before{content:"";position:absolute;left:0;top:0;border:3px solid transparent;border-left-color:#1c7a2c;border-top-color:#1c7a2c}
    td div.top{align-items:flex-start}
    td div.mid{justify-content:center;text-align:center;padding:0}
    .kod{font:700 20px/24px "Liberation Sans",sans-serif}
    .ebk{font:700 24px/28px "Liberation Sans",sans-serif}
    .h{font-size:18px;line-height:26px}
    .y{font-size:19px;line-height:26px}
    .m{font-size:16px;line-height:23px}
    .l{font-size:15px;line-height:22px}
    .n{font-size:23px;line-height:28px}
    .v{font-size:21px;line-height:28px}
    .p{font-size:24px;line-height:28px}
    .b{font-size:25px;line-height:30px}
    .x{font-size:32px;line-height:36px}
    .s{font-size:14px;line-height:18px}
    .t{font-size:11px;line-height:16px}
    .u{font-size:13px;line-height:18px}
    .w{font-size:14px;line-height:22px}
    td div.ind{padding-left:19px}
    td div.ra{justify-content:flex-end;text-align:right;padding:0}
    td div.flush{padding:0}
    .cur{position:absolute;left:29px;top:13px}
    aside{width:17px;flex:none;background:#f7f7f7;display:flex;flex-direction:column;align-items:center;padding:3px 0 2px}
    aside button{height:10px}
    .track{flex:1;width:100%;display:flex;justify-content:center;padding-top:1px}
    .thumb{width:7px;height:42%;border-radius:4px;background:#6c6c6c}
    </style><div class="view"><table><colgroup><col style="width:23px">${COLS.map(([,w])=>`<col${w?` style="width:${w}px"`:''}>`).join('')}</colgroup>
    <thead><tr><th><ui-icon name="corner"></ui-icon></th>${head}</tr></thead><tbody>${body}</tbody></table></div>
    <aside><button aria-label="Yukarı"><ui-icon name="triU"></ui-icon></button><div class="track"><div class="thumb"></div></div><button aria-label="Aşağı"><ui-icon name="triD"></ui-icon></button></aside>`;
  }
});

define('sheet-tabs', `
:host{display:flex;align-items:center;height:27px;background:#e5e5e5;padding:0 20px 0 20px;font-size:11px}
.nav{display:flex;gap:20px;margin-right:42px}
nav{display:flex;align-items:center;gap:8px;align-self:stretch}
nav button{height:21px;padding:0 8px;border-radius:4px}
nav .a,nav .b{padding:0 6px}
.a{background:#0f74bd;color:#fff}.b{background:#ac0008;color:#fff}.c{background:#12bdec;color:#154054}
nav .v{align-self:flex-start;background:linear-gradient(#fff,#c3f0cd);font-weight:600;height:25px;border-radius:0 0 4px 4px;padding:0 7px}
.v span{border-bottom:1px solid #14803c;line-height:16px}
.pl{margin-left:42px}
.sc{margin-left:auto;display:flex;align-items:center;gap:16px}
.bar{display:flex;align-items:center;gap:7px;width:472px}
.bar div{flex:1}.bar div i{display:block;width:22px;height:7px;border-radius:4px;background:#666}`, `
<div class="nav"><button aria-label="Önceki"><ui-icon name="prev"></ui-icon></button><button aria-label="Sonraki"><ui-icon name="next"></ui-icon></button></div>
<nav><button class="a">Sayfa1</button><button class="b">Sayfa2</button><button>Sayfa3</button><button class="c">BİLANÇO</button><button class="v" aria-current="page"><span>VİDEO</span></button><button>İŞYATIRIM</button></nav>
<button class="pl" aria-label="Yeni sayfa"><ui-icon name="plus"></ui-icon></button>
<div class="sc"><ui-icon name="dots"></ui-icon><div class="bar"><button aria-label="Sola"><ui-icon name="triL"></ui-icon></button><div><i></i></div><button aria-label="Sağa"><ui-icon name="triR"></ui-icon></button></div></div>`);

define('status-bar', `
:host{display:flex;align-items:center;height:18px;background:#f4f4f4;padding:0 20px 0 6px;font-size:9px}
.acc{gap:2px;margin-left:16px}
.r{margin-left:auto;display:flex;align-items:center;height:100%}
.r .vw{width:33px;height:100%}
.r .on{background:#dadada}
input{appearance:none;width:80px;height:12px;background:linear-gradient(#8a8a8a,#8a8a8a) center/100% 1px no-repeat;margin:0 5px}
input::-webkit-slider-thumb{appearance:none;width:3px;height:9px;background:#444}
.z{margin-left:9px}`, `
<span>Hazır</span><button class="acc"><ui-icon name="acc"></ui-icon>Erişilebilirlik: Önerilere göz atın</button>
<div class="r"><button class="vw on" aria-label="Normal"><ui-icon name="vnorm"></ui-icon></button><button class="vw" aria-label="Sayfa Düzeni"><ui-icon name="vpage"></ui-icon></button><button class="vw" aria-label="Sayfa Sonu Önizleme"><ui-icon name="vbrk"></ui-icon></button>
<button aria-label="Uzaklaştır" style="margin-left:6px"><ui-icon name="minusS"></ui-icon></button><input type="range" min="10" max="180" value="84" aria-label="Yakınlaştırma"><button aria-label="Yakınlaştır"><ui-icon name="plusS"></ui-icon></button><button class="z">%90</button></div>`);

define('excel-app', `
:host{display:flex;flex-direction:column;height:100vh;padding:20px 0;background:#000;overflow:hidden}
main{flex:1;min-height:0;display:flex;flex-direction:column;background:linear-gradient(90deg,#dee7dc,#e0ecdc 50%,#e3e5e2 72%,#e4e4e4)}
title-bar,menu-tabs,ribbon-bar,security-bar,formula-bar,sheet-tabs,status-bar{flex:none}`, `
<main><title-bar></title-bar><menu-tabs></menu-tabs><ribbon-bar></ribbon-bar><security-bar></security-bar><formula-bar></formula-bar><sheet-grid></sheet-grid><sheet-tabs></sheet-tabs><status-bar></status-bar></main>`);
</script>
</body>
</html>
